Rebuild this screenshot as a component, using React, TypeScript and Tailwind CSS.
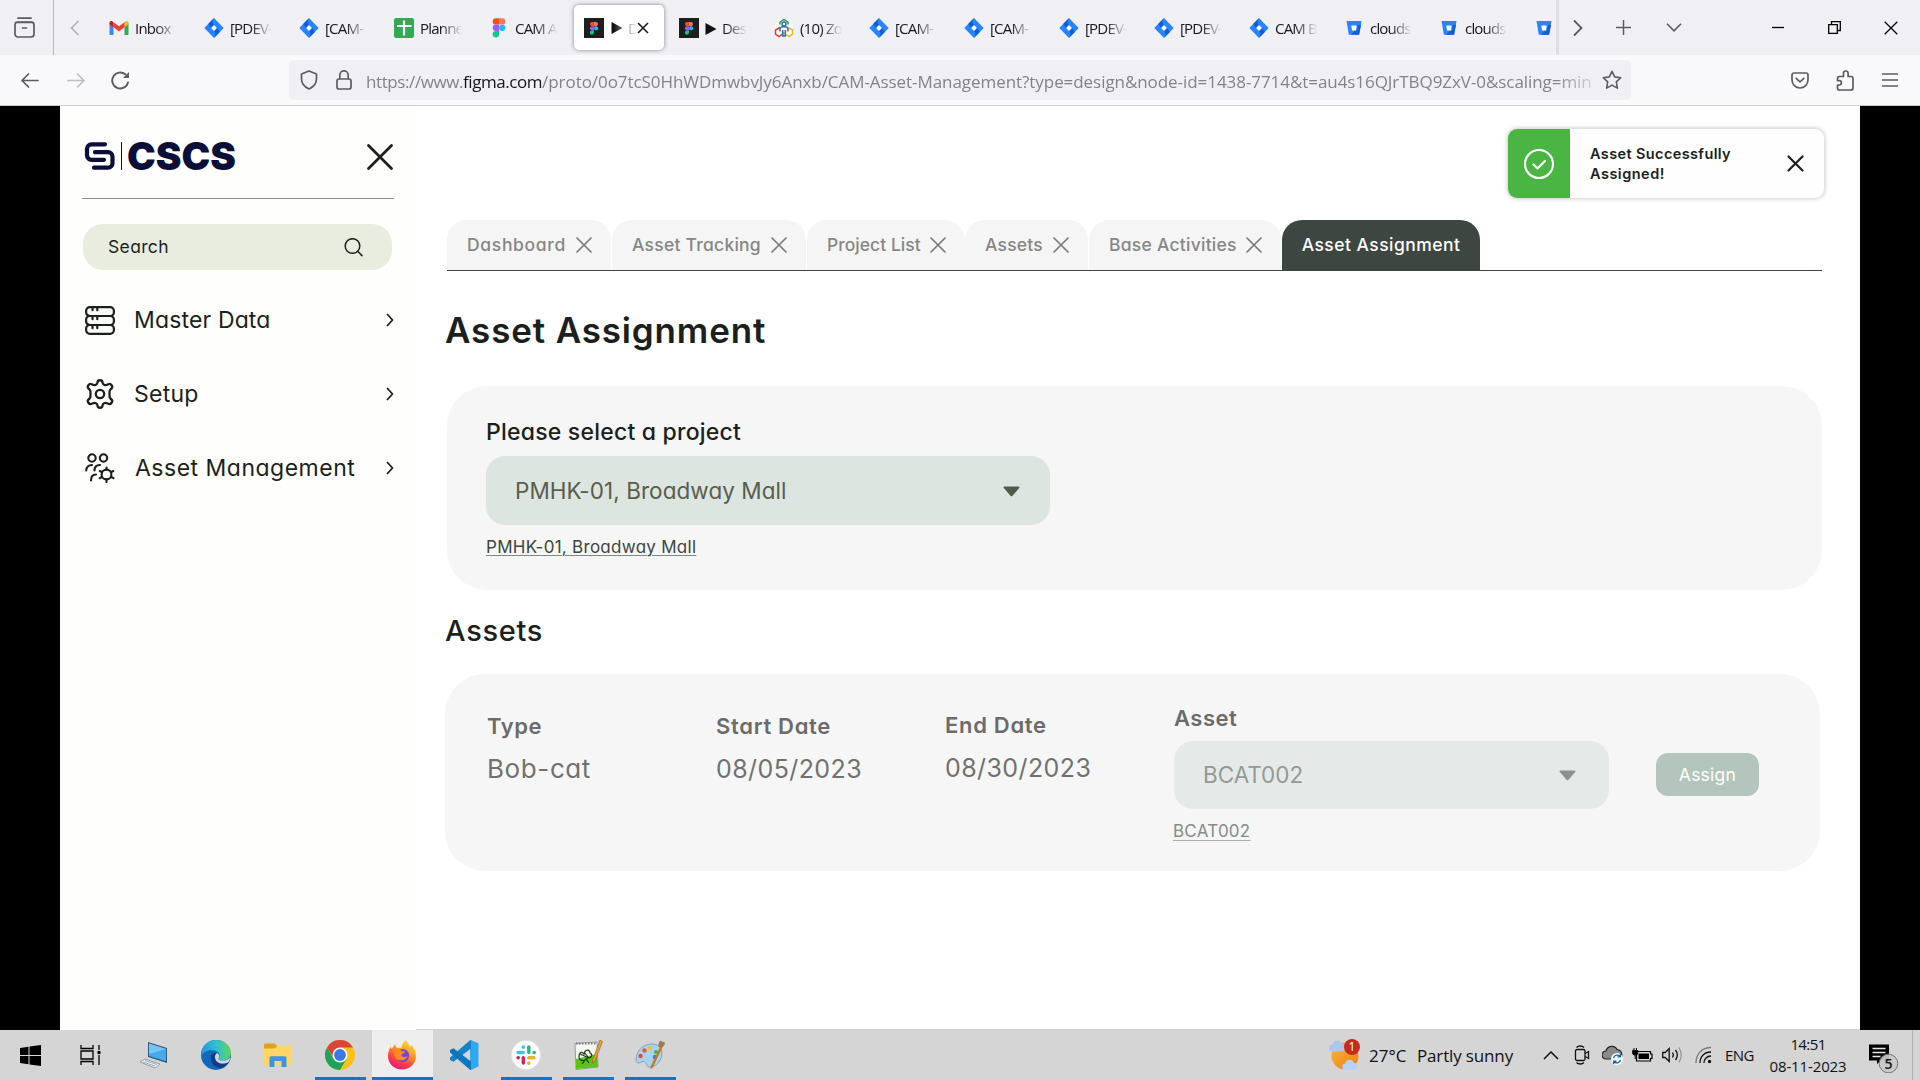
import type { ReactNode } from "react";

/* ---------- favicons ---------- */

const Gmail = () => (
  <svg width="20" height="20" viewBox="0 0 20 20">
    <path d="M0.5 5v11c0 .6.4 1 1 1h3V8z" fill="#4285F4" />
    <path d="M19.500 5v11c0 .6-.4 1-1 1h-3V8z" fill="#34A853" />
    <path d="M15.500 4.200v5l4-3V4.800c0-1.700-1.800-2.300-3-1.400z" fill="#FBBC04" />
    <path d="M4.500 9.200v-5l5.500 4.100 5.500-4.100v5L10 13.400z" fill="#EA4335" />
    <path d="M.5 4.800v1.400l4 3v-5l-1-.8c-1.200-.9-3-.3-3 1.400z" fill="#C5221F" />
  </svg>
);

const Jira = () => (
  <svg width="20" height="20" viewBox="0 0 20 20">
    <path d="M10 0l9.700 10L10 20 .3 10z" fill="#2684FF" />
    <path d="M10 0c-2 2-2 5 0 7L7 10 4.200 6z" fill="#0F5FD6" />
    <path d="M10 20c2-2 2-5 0-7l3-3 2.800 4z" fill="#0F5FD6" />
    <path d="M10 7l2.900 3-2.900 3-2.900-3z" fill="#fff" />
  </svg>
);

const Sheet = () => (
  <svg width="20" height="20" viewBox="0 0 20 20">
    <rect width="20" height="20" rx="2" fill="#34A853" />
    <path d="M10 2.500v15M3 8h14.500" stroke="#fff" strokeWidth="2.200" />
  </svg>
);

const FigmaShapes = () => (
  <>
    <path d="M3.500 0H6.500V6.600H3.500A3.300 3.300 0 0 1 3.500 0z" fill="#F24E1E" />
    <path d="M6.500 0h3a3.300 3.300 0 0 1 0 6.600h-3z" fill="#FF7262" />
    <path d="M3.500 6.600h3v6.600h-3a3.300 3.300 0 0 1 0-6.600z" fill="#A259FF" />
    <circle cx="9.800" cy="9.900" r="3.200" fill="#1ABCFE" />
    <path d="M3.500 13.200h3v3.300a3.200 3.300 0 1 1-3-3.300z" fill="#0ACF83" />
  </>
);

const Figma = () => (
  <svg width="20" height="20" viewBox="-3.500 -.2 20 20">
    <g transform="scale(1 .97)"><FigmaShapes /></g>
  </svg>
);

const FigmaDark = () => (
  <svg width="20" height="20" viewBox="0 0 20 20">
    <rect width="20" height="20" fill="#1E1E1E" />
    <g transform="translate(5.800 4) scale(.64)"><FigmaShapes /></g>
  </svg>
);

const Zoho = () => (
  <svg width="20" height="20" viewBox="0 0 20 20" fill="none" strokeWidth="1.500">
    <rect x="1" y="1" width="18" height="18" rx="7" fill="#fff" />
    <path d="M6 6.500V4.200L10 1.400l4 2.800v2.300" stroke="#22A05B" />
    <path d="M6 9.500L1.500 12v4l3.500 2.600L8.700 16v-2" stroke="#E5343D" />
    <path d="M14 9.500l4.500 2.500v4L15 18.600 11.300 16v-2" stroke="#F2B51D" />
    <circle cx="10" cy="6" r="2" stroke="#2B6CB0" />
    <path d="M6 13.500V11c0-1.400 1.600-2.200 4-2.200s4 .8 4 2.200v2.500M8.700 12v6h2.600v-6" stroke="#2B6CB0" />
  </svg>
);

const Bitbucket = () => (
  <svg width="20" height="20" viewBox="0 0 20 20">
    <path d="M2.500 3h15l-2.300 13.800H4.800z" fill="#2684FF" />
    <path d="M17 7l-2 9.800H7l4-4h2l.8-5.800z" fill="#0F5FD6" />
    <path d="M7.300 7.500h5.400l-.7 5H8z" fill="#fff" />
  </svg>
);

type Tab = { icon: ReactNode; label: string; active?: boolean; play?: boolean };

const browserTabs: Tab[] = [
  { icon: <Gmail />, label: "Inbox" },
  { icon: <Jira />, label: "[PDEV-" },
  { icon: <Jira />, label: "[CAM-" },
  { icon: <Sheet />, label: "Planne" },
  { icon: <Figma />, label: "CAM A" },
  { icon: <FigmaDark />, label: "D", active: true, play: true },
  { icon: <FigmaDark />, label: "Des", play: true },
  { icon: <Zoho />, label: "(10) Zo" },
  { icon: <Jira />, label: "[CAM-" },
  { icon: <Jira />, label: "[CAM-" },
  { icon: <Jira />, label: "[PDEV-" },
  { icon: <Jira />, label: "[PDEV-" },
  { icon: <Jira />, label: "CAM B" },
  { icon: <Bitbucket />, label: "clouds" },
  { icon: <Bitbucket />, label: "clouds" },
];

function PlayMark() {
  return (
    <svg width="12" height="14" viewBox="0 0 12 14" className="mr-[5px] shrink-0">
      <path d="M.5 1l11 6-11 6z" fill="#111" />
    </svg>
  );
}

function BrowserTab({ tab }: { tab: Tab }) {
  if (tab.active) {
    return (
      <div className="mx-[2.500px] flex h-[45px] w-[90px] shrink-0 items-center rounded-[5px] bg-white pl-[10px] shadow-[0_0_4px_rgba(0,0,0,0.45)]">
        {tab.icon}
        <div className="ml-[7px] flex w-[25px] items-center overflow-hidden pt-px [mask-image:linear-gradient(to_right,black_10%,transparent_110%)]">
          <PlayMark />
          <span>{tab.label}</span>
        </div>
        <svg width="12" height="12" viewBox="0 0 12 12" className="ml-[1px]">
          <path d="M1 1l10 10M11 1L1 11" stroke="#15141a" strokeWidth="1.500" />
        </svg>
      </div>
    );
  }
  return (
    <div className="flex h-[45px] w-[95px] shrink-0 items-center pl-[12.500px]">
      {tab.icon}
      <div className="ml-[6px] flex w-[46px] items-center whitespace-nowrap pt-[2px] tracking-[-0.8px] [mask-image:linear-gradient(to_right,black_45%,transparent_92%)]">
        {tab.play && <PlayMark />}
        <span>{tab.label}</span>
      </div>
    </div>
  );
}

function TabStrip() {
  return (
    <div className="flex h-[55px] items-center bg-[#f0f0f4] text-[15px] text-[#15141a]">
      <div className="flex h-full w-[54px] shrink-0 items-center border-r border-[#b4b4ba] pl-[14px]">
        <svg width="21" height="21" viewBox="0 0 21 21" fill="none" stroke="#5b5b66" strokeWidth="1.700" strokeLinecap="round">
          <path d="M4 1.200h13" />
          <rect x="1" y="5" width="19" height="15" rx="3" />
          <path d="M1.500 5.500h18M8.500 11h4" />
        </svg>
      </div>
      <div className="flex w-[42.500px] shrink-0 justify-center">
        <svg width="10" height="16" viewBox="0 0 10 16" fill="none" stroke="#b0b0b6" strokeWidth="1.600">
          <path d="M8.500 1L1.500 8l7 7" />
        </svg>
      </div>
      <div className="flex h-full w-[1462.500px] shrink-0 items-center overflow-hidden border-r-[3px] border-[#dedee3]">
        {browserTabs.map((t, i) => (
          <BrowserTab key={i} tab={t} />
        ))}
        <div className="shrink-0 pl-[12px]"><Bitbucket /></div>
      </div>
      <div className="flex flex-1 items-center">
        <svg width="10" height="18" viewBox="0 0 10 18" fill="none" stroke="#5b5b66" strokeWidth="1.800" className="ml-[14px]">
          <path d="M1 1.500L8.500 9 1 16.500" />
        </svg>
        <svg width="15" height="15" viewBox="0 0 15 15" stroke="#5b5b66" strokeWidth="1.500" className="ml-[33px]">
          <path d="M7.500 0v15M0 7.500h15" />
        </svg>
        <svg width="16" height="9" viewBox="0 0 16 9" fill="none" stroke="#5b5b66" strokeWidth="1.600" className="ml-[35px]">
          <path d="M1 .8l7 7 7-7" />
        </svg>
        <svg width="12" height="12" viewBox="0 0 12 12" stroke="#000" strokeWidth="1.300" className="ml-[90px]">
          <path d="M0 5.500h12" />
        </svg>
        <svg width="13" height="13" viewBox="0 0 13 13" fill="none" stroke="#000" strokeWidth="1.300" className="ml-[44px]">
          <path d="M.7 3.700h8.600v8.600H.7zM3.500 3.700V.7h8.800v8.800H9.300" />
        </svg>
        <svg width="14" height="14" viewBox="0 0 14 14" stroke="#000" strokeWidth="1.300" className="ml-[43px]">
          <path d="M.7.7l12.600 12.600M13.300.7L.7 13.300" />
        </svg>
      </div>
    </div>
  );
}

function AddressBar() {
  return (
    <div className="flex h-[51px] items-center border-b border-[#c9c9ce] bg-[#f9f9fb]">
      <svg width="18" height="15" viewBox="0 0 18 15" fill="none" stroke="#5b5b66" strokeWidth="1.700" strokeLinecap="round" strokeLinejoin="round" className="ml-[21px]">
        <path d="M17 7.500H1M7.500 1L1 7.500 7.500 14" />
      </svg>
      <svg width="18" height="15" viewBox="0 0 18 15" fill="none" stroke="#bdbdc3" strokeWidth="1.700" strokeLinecap="round" strokeLinejoin="round" className="ml-[28px]">
        <path d="M1 7.500h16M10.500 1L17 7.500 10.500 14" />
      </svg>
      <svg width="19" height="19" viewBox="0 0 19 19" fill="none" stroke="#5b5b66" strokeWidth="1.900" strokeLinecap="round" className="ml-[26px]">
        <path d="M17 11.500A8 8 0 1 1 14.500 3.500" />
        <path d="M18 1v6h-6z" fill="#5b5b66" stroke="none" />
      </svg>
      <div className="ml-[159px] flex h-[40px] w-[1342px] items-center rounded-[5px] bg-[#f0f0f4]">
        <svg width="18" height="20" viewBox="0 0 18 20" fill="none" stroke="#5b5b66" strokeWidth="1.700" strokeLinejoin="round" className="ml-[11px]">
          <path d="M9 1l7.500 3v4.500c0 5-3 8.500-7.500 10.500C4.500 17 1.500 13.500 1.500 8.500V4z" />
        </svg>
        <svg width="16" height="20" viewBox="0 0 16 20" fill="none" stroke="#5b5b66" strokeWidth="1.700" className="ml-[18px]">
          <rect x="1" y="9" width="14" height="10" rx="2" />
          <path d="M3.800 9V5a4.200 4.200 0 0 1 8.400 0v4" />
        </svg>
        <div className="ml-[14px] flex w-[1226px] overflow-hidden whitespace-nowrap pt-[4px] text-[17px] leading-6 text-[#82828a] [mask-image:linear-gradient(to_right,black_97%,transparent_101%)]">
          <span className="tracking-[-0.41px]">https://www.</span>
          <span className="tracking-[-0.44px] text-[#15141a]">figma.com</span>
          <span className="tracking-[-0.06px]">/proto/0o7tcS0HhWDmwbvJy6Anxb/CAM-Asset-Management?type=design&amp;node-id=1438-7714&amp;t=au4s16QJrTBQ9ZxV-0&amp;scaling=min</span>
        </div>
        <svg width="20" height="20" viewBox="0 0 20 20" fill="none" stroke="#5b5b66" strokeWidth="1.600" strokeLinejoin="round" className="ml-[10px]">
          <path d="M10 1.300l2.700 5.600 6.100.8-4.500 4.200 1.100 6.200L10 15.100l-5.400 3 1.100-6.200L1.200 7.700l6.100-.8z" />
        </svg>
      </div>
      <svg width="18" height="17" viewBox="0 0 18 17" fill="none" stroke="#5b5b66" strokeWidth="1.700" strokeLinecap="round" strokeLinejoin="round" className="ml-[160px]">
        <path d="M3 1h12a2 2 0 0 1 2 2v5a8 8 0 0 1-16 0V3a2 2 0 0 1 2-2z" />
        <path d="M5.200 6.300L9 10l3.800-3.700" />
      </svg>
      <svg width="18" height="21" viewBox="0 0 18 21" fill="none" stroke="#5b5b66" strokeWidth="1.700" strokeLinejoin="round" className="ml-[27px]">
        <path d="M3.500 6.500h4V3.300a2.300 2.300 0 0 1 4.600 0v3.200H15a2 2 0 0 1 2 2V18a2 2 0 0 1-2 2H3.500a2 2 0 0 1-2-2v-3h1.700a2.200 2.200 0 0 0 0-4.400H1.500V8.500a2 2 0 0 1 2-2z" />
      </svg>
      <svg width="16" height="14" viewBox="0 0 16 14" stroke="#5b5b66" strokeWidth="1.500" className="ml-[28px]">
        <path d="M0 1h16M0 7h16M0 13h16" />
      </svg>
    </div>
  );
}

/* ---------- sidebar ---------- */

const ServerIcon = () => (
  <svg width="30" height="29" viewBox="0 0 30 29" fill="none" stroke="#1b1f1d" strokeWidth="2.200" strokeLinecap="round">
    <rect x="1.100" y="1.100" width="27.800" height="8.900" rx="3.800" />
    <rect x="1.100" y="10" width="27.800" height="9" rx="3.800" />
    <rect x="1.100" y="19" width="27.800" height="8.900" rx="3.800" />
    <path d="M7.500 2v2.200M12.300 2v2.200M7.500 11v2.200M12.300 11v2.200M7.500 20v2.200M12.300 20v2.200" />
  </svg>
);

const GearIcon = () => (
  <svg width="30" height="30" viewBox="0 0 30 30" fill="none" stroke="#1b1f1d" strokeWidth="2.300" strokeLinejoin="round">
    <path d="M12.500 3.500c0-3 5-3 5 0 .2 2 2.600 3.300 4.600 2.300l1.200-.6c2.600-1.200 5.200 2.600 3.100 4.400l-.9.800c-1.300 1.100-1 2.800-1 4.600s-.3 3.500 1 4.600l.9.800c2.100 1.800-.5 5.600-3.100 4.400l-1.200-.6c-2-1-4.400.3-4.600 2.300 0 3-5 3-5 0-.2-2-2.600-3.300-4.600-2.300l-1.200.6c-2.600 1.200-5.200-2.600-3.100-4.400l.9-.8c1.300-1.100 1-2.800 1-4.600s.3-3.500-1-4.600l-.9-.8C1.500 7.800 4.100 4 6.700 5.200l1.200.6c2 1 4.400-.3 4.600-2.300z" />
    <circle cx="15" cy="15" r="4.200" />
  </svg>
);

const TeamGearIcon = () => (
  <svg width="30" height="30" viewBox="0 0 30 30" fill="none" stroke="#1b1f1d" strokeWidth="2.100" strokeLinecap="round" strokeLinejoin="round">
    <circle cx="7" cy="5" r="3.700" />
    <circle cx="18.500" cy="5" r="3.700" />
    <path d="M1.200 17.500c0-3.500 2.300-5.500 5.800-5.500M9.500 17.500c0-3.600 2-5.700 5.500-5.500M6 27.500c0-3.500 1.800-6 5-6" />
    <circle cx="21.500" cy="21.500" r="4.900" />
    <path d="M21.500 14.500v2M21.500 26.500v2.500M14.800 18l2 1M26.400 24l2 1.200M28.300 18l-2 1M14.800 25.200l2-1.200" />
  </svg>
);

function NavItem({ icon, label, className }: { icon: ReactNode; label: string; className: string }) {
  return (
    <div className="flex h-[74px] items-center pl-[24px]">
      <div className="flex w-[31px] justify-center">{icon}</div>
      <span className={`ml-[19px] flex-1 text-[23px] leading-8 text-[#1b1f1d] ${className}`}>{label}</span>
      <svg width="8" height="14" viewBox="0 0 8 14" fill="none" stroke="#1b1f1d" strokeWidth="1.800" strokeLinejoin="round" className="mr-[22px]">
        <path d="M1 1l5.500 6L1 13" />
      </svg>
    </div>
  );
}

function Sidebar() {
  return (
    <aside className="flex w-[356px] shrink-0 flex-col bg-[#fefefc]">
      <div className="flex h-[92px] items-center pl-[24px] pt-[8px]">
        <svg width="32" height="28" viewBox="0 0 32 28" fill="none" stroke="#0b0e38" strokeWidth="4.200" strokeLinecap="round">
          <path d="M21 2.300H7.500A4.500 4.500 0 0 0 3 6.800v6.500a4.500 4.500 0 0 0 4.500 4.500H20" />
          <path d="M10 25.700h14a4.500 4.500 0 0 0 4.500-4.500v-6.500a4.500 4.500 0 0 0-4.500-4.500H11" />
        </svg>
        <div className="ml-[5px] h-[28px] w-px bg-[#0b0e38]" />
        <span className="ml-[5px] w-[113px] text-[38.500px] font-black leading-[44px] tracking-[0px] text-[#0b0e38]">CSCS</span>
        <svg width="26" height="26" viewBox="0 0 26 26" stroke="#1b1f1d" strokeWidth="2.700" strokeLinecap="round" className="ml-[127px] mt-[1px] shrink-0">
          <path d="M1.500 1.500l23 23M24.500 1.500l-23 23" />
        </svg>
      </div>
      <div className="ml-[22px] w-[312px] border-t border-[#8f8f8e]" />
      <div className="ml-[23px] mt-[25px] flex h-[46px] w-[309px] items-center justify-between rounded-[20px] bg-[#e9ede0] pl-[25px] pr-[29px]">
        <span className="pt-px text-[17.500px] tracking-[0.35px] text-[#1b1f1d]">Search</span>
        <svg width="19" height="19" viewBox="0 0 19 19" fill="none" stroke="#1b1f1d" strokeWidth="1.500" strokeLinecap="round">
          <circle cx="8.500" cy="8" r="7.300" />
          <path d="M13.700 13.300l4.300 4.300" />
        </svg>
      </div>
      <div className="mt-[13px] flex flex-col">
        <NavItem icon={<ServerIcon />} label="Master Data" className="tracking-[0.15px]" />
        <NavItem icon={<GearIcon />} label="Setup" className="tracking-[0.25px]" />
        <NavItem icon={<TeamGearIcon />} label="Asset Management" className="pl-px tracking-[0.5px]" />
      </div>
    </aside>
  );
}

/* ---------- main area ---------- */

function PageTab({ label, className }: { label: string; className: string }) {
  return (
    <div className={`flex h-[50px] shrink-0 items-center justify-between rounded-t-[20px] bg-[#f5f5f5] pl-[20px] pr-[19px] text-[17.500px] font-medium text-[#868686] ${className}`}>
      <span className="pt-px">{label}</span>
      <svg width="16" height="16" viewBox="0 0 16 16" stroke="#7b7b7b" strokeWidth="1.700" strokeLinecap="round">
        <path d="M1 1l14 14M15 1L1 15" />
      </svg>
    </div>
  );
}

function Caret({ className }: { className: string }) {
  return (
    <svg width="17" height="11" viewBox="0 0 17 11" className={className}>
      <path d="M1.500.5h14c1 0 1.300.9.700 1.500L9.500 9.800c-.6.7-1.400.7-2 0L.8 2C.2 1.400.5.500 1.500.500z" />
    </svg>
  );
}

function Toast() {
  return (
    <div className="mr-[36px] mt-[23px] flex h-[69px] w-[316px] items-center self-end overflow-hidden rounded-[9px] bg-[#fefefe] shadow-[0_0_4px_1px_rgba(0,0,0,0.2)]">
      <div className="flex h-full w-[62px] items-center justify-center bg-[#4ab543]">
        <svg width="32" height="32" viewBox="0 0 32 32" fill="none" stroke="#fff" strokeWidth="2.200" strokeLinecap="round" strokeLinejoin="round">
          <circle cx="16" cy="16" r="14" />
          <path d="M10.500 16.500l4 4 7.500-7.500" />
        </svg>
      </div>
      <div className="flex w-[196px] flex-col pl-[20px] text-[14.500px] font-semibold leading-5 text-[#1b1f1d]">
        <span className="tracking-[0.38px]">Asset Successfully</span>
        <span className="tracking-[0.5px]">Assigned!</span>
      </div>
      <svg width="17" height="17" viewBox="0 0 17 17" stroke="#1b1f1d" strokeWidth="2.200" strokeLinecap="round" className="ml-[21px]">
        <path d="M1.500 1.500l14 14M15.500 1.500l-14 14" />
      </svg>
    </div>
  );
}

function Field({ label, value, labelClass, valueClass, className }: { label: string; value: string; labelClass: string; valueClass: string; className: string }) {
  return (
    <div className={`flex shrink-0 flex-col ${className}`}>
      <span className={`h-[30px] text-[22px] font-semibold leading-[30px] text-[#6b6b6b] ${labelClass}`}>{label}</span>
      <span className={`mt-[11px] h-[34px] leading-[34px] text-[#717171] ${valueClass}`}>{value}</span>
    </div>
  );
}

function Main() {
  return (
    <main className="flex flex-1 flex-col border-b border-[#d0d0d0] bg-white pl-[30px]">
      <Toast />
      <div className="ml-[1px] mt-[22px] flex h-[51px] w-[1375px] border-b-[1.500px] border-[#3e4641]">
        <PageTab label="Dashboard" className="w-[164px] tracking-[0.68px]" />
        <PageTab label="Asset Tracking" className="ml-px w-[194px] tracking-[0.25px]" />
        <PageTab label="Project List" className="ml-px w-[158px] tracking-[0.03px]" />
        <PageTab label="Assets" className="w-[123px] tracking-[0.2px]" />
        <PageTab label="Base Activities" className="ml-px w-[192px] tracking-[0.25px]" />
        <div className="ml-px flex h-[50px] w-[198px] items-center justify-center rounded-t-[20px] bg-[#3e4641] pt-px text-[17.500px] font-medium tracking-[0.46px] text-white">
          Asset Assignment
        </div>
      </div>

      <h1 className="-ml-px mt-[36px] h-[46px] text-[35px] font-semibold leading-[46px] tracking-[0.85px] text-[#1b1f1d]">Asset Assignment</h1>

      <section className="ml-[1px] mt-[33px] flex h-[204px] w-[1375px] flex-col rounded-[40px] bg-[#f6f6f6] pl-[39px] pt-[30px]">
        <span className="h-[32px] text-[23px] font-medium leading-[32px] tracking-[0.22px] text-[#1b1f1d]">Please select a project</span>
        <div className="mt-[8px] flex h-[69px] w-[564px] items-center justify-between rounded-[19px] bg-[#dce5e0] pl-[29px] pr-[30px] text-[22.500px] tracking-[0.06px] text-[#5a5d4c]">
          <span className="pt-px">PMHK-01, Broadway Mall</span>
          <Caret className="mt-[2px] fill-[#555a48]" />
        </div>
        <a className="mt-[12px] h-[21px] w-fit text-[17px] leading-[21px] tracking-[0.28px] text-[#3e4641] underline decoration-[#7d8a83] decoration-1 underline-offset-[2px]">PMHK-01, Broadway Mall</a>
      </section>

      <h2 className="-ml-px mt-[21px] h-[40px] text-[29px] font-medium leading-[40px] tracking-[0.7px] text-[#1b1f1d]">Assets</h2>

      <section className="-ml-px mt-[23px] flex h-[197px] w-[1375px] items-start rounded-[40px] bg-[#f6f6f6] pl-[42px]">
        <Field label="Type" value="Bob-cat" labelClass="tracking-[0.55px]" valueClass="text-[26px] tracking-[0.6px]" className="w-[229px] pt-[37px]" />
        <Field label="Start Date" value="08/05/2023" labelClass="tracking-[0.68px]" valueClass="text-[25px] tracking-[0.41px]" className="w-[229px] pt-[37px]" />
        <Field label="End Date" value="08/30/2023" labelClass="tracking-[0.7px]" valueClass="text-[25px] tracking-[0.41px]" className="w-[229px] pt-[36px]" />
        <div className="flex w-[435px] shrink-0 flex-col pt-[29px]">
          <span className="h-[30px] text-[22px] font-semibold leading-[30px] tracking-[0.5px] text-[#6b6b6b]">Asset</span>
          <div className="mt-[8px] flex h-[68px] items-center justify-between rounded-[19px] bg-[#e5eae8] pl-[29px] pr-[33px] text-[22.500px] tracking-[0px] text-[#929a96]">
            BCAT002
            <Caret className="mt-[1px] fill-[#8b928f]" />
          </div>
          <a className="-ml-px mt-[12px] h-[21px] w-fit text-[17px] leading-[21px] tracking-[0.25px] text-[#878c89] underline decoration-[#a9afac] decoration-1 underline-offset-[3px]">BCAT002</a>
        </div>
        <button className="ml-[47px] mt-[79px] h-[43px] w-[103px] rounded-[12px] bg-[#b3c5bc] pt-px text-[17.500px] tracking-[0.25px] text-white">Assign</button>
      </section>
    </main>
  );
}

/* ---------- taskbar ---------- */

const WindowsIcon = () => (
  <svg width="21" height="21" viewBox="0 0 21 21">
    <path d="M0 3l8.500-1.200V10H0zM9.500 1.600L21 0v10H9.500zM0 11h8.500v8.200L0 18zM9.500 11H21v10L9.500 19.400z" />
  </svg>
);
const TaskViewIcon = () => (
  <svg width="21" height="20" viewBox="0 0 21 20" fill="none" stroke="#000" strokeWidth="1.300">
    <path d="M1 0v3.500h12V0M1 20v-3.500h12V20M1 6h12v8H1zM19 0v5M19 10v10" />
    <path d="M17.500 6h3v3h-3z" fill="#000" stroke="none" />
  </svg>
);
const LaptopIcon = () => (
  <svg width="29" height="28" viewBox="0 0 29 28">
    <path d="M8 1l19 6v15L8 16z" fill="#34587a" />
    <path d="M9 2.500L26 8v12.300L9 15z" fill="#45a9ee" />
    <path d="M9 2.500L26 8 9 13z" fill="#76c5f7" />
    <path d="M0 21l5-3 15 5-5 4z" fill="#eceff1" stroke="#78909c" strokeWidth=".8" />
    <path d="M3 21l12 4M5 19.500l12 4" stroke="#78909c" strokeWidth=".7" />
  </svg>
);
const EdgeIcon = () => (
  <svg width="30" height="30" viewBox="0 0 30 30">
    <defs>
      <linearGradient id="edgeTop" x1="0" y1=".5" x2="1" y2=".4">
        <stop offset="0" stopColor="#2299e0" />
        <stop offset=".55" stopColor="#2fc2cf" />
        <stop offset="1" stopColor="#66d64a" />
      </linearGradient>
    </defs>
    <circle cx="15" cy="15" r="15" fill="#1466b8" />
    <path d="M.3 13C1 5.500 7.300 0 15 0c9 0 15 6.500 15 12.500 0 5-3.700 8-8 8-3.500 0-5-1.300-4-3 1.500-2.500 0-6.500-5-7C6.500 9.800 1.500 12 .3 17z" fill="url(#edgeTop)" />
    <path d="M10 16c-1 6 3.500 12.500 10 12 3-.5 6-3 7.500-6-6 3.500-13.500 1-13.500-5 0-2 1.200-3.400 2-4-3-.5-5.500.8-6 3z" fill="#0c3f83" />
    <path d="M14 17c0-2 1.200-3.400 2-4 2 .8 2.700 3 1.800 4.700-1 1.800.7 2.900 4.200 2.900 2.500 0 5-1 7.200-3.200-.2 1.700-.8 3.300-1.700 4.600-6 3.500-13.500 1-13.500-5z" fill="#d4d4d4" />
  </svg>
);
const FolderIcon = () => (
  <svg width="28" height="25" viewBox="0 0 28 25">
    <path d="M0 2c0-1 .5-1.500 1.500-1.500h9L13 3v4H0z" fill="#E0A21A" />
    <path d="M0 5.500h11l3-3h13.500V22H0z" fill="#FFD566" />
    <path d="M5.500 24v-9c0-1 .6-1.800 1.800-1.800h13.400c1.200 0 1.800.8 1.800 1.800v9h-5v-6h-7v6z" fill="#3A96DD" />
  </svg>
);
const ChromeIcon = () => (
  <svg width="30" height="30" viewBox="0 0 30 30">
    <circle cx="15" cy="15" r="15" fill="#FBC116" />
    <path d="M2 7.500A15 15 0 0 1 28 7.500H15L9 18.500z" fill="#DB4437" />
    <path d="M2 7.500A15 15 0 0 0 15 30l6.500-11.200L8.500 18.800z" fill="#1DA35B" />
    <circle cx="15" cy="15" r="7.500" fill="#fff" />
    <circle cx="15" cy="15" r="5.900" fill="#3B78E7" />
  </svg>
);
const FirefoxIcon = () => (
  <svg width="30" height="30" viewBox="0 0 30 30">
    <defs>
      <linearGradient id="fox" x1=".8" y1="0" x2=".3" y2="1">
        <stop offset="0" stopColor="#FFE83B" />
        <stop offset=".4" stopColor="#FF9A1F" />
        <stop offset=".75" stopColor="#FF3B47" />
        <stop offset="1" stopColor="#E31587" />
      </linearGradient>
    </defs>
    <path d="M18.500 0c3 3 4 5 4.500 7 1-.8 1-1.800 1-2.500 3 3 5 7 5 11.500C29 24 22.800 29.500 15 29.500S1 24 1 16c0-4 1-7 3-9.500 0 1.300.2 2 .7 2.700C5.800 7 7 5.500 8.500 4.300c0 1.500.5 3 2 3.700 1.500-.5 3-.3 4 0 .3-3 1.500-6 4-8z" fill="url(#fox)" />
    <circle cx="15.500" cy="15.500" r="6.600" fill="#7542E5" />
    <path d="M7 12c2-3 6-2.500 8-1 1.800 0 3 .6 3 1.300-.5 1.200-3 1-3.500 2.500 0 2 3.500 3.500 6 1-1 5-9 6.500-12 2C7.500 16.500 7 14.500 7 12z" fill="#FF8A1E" />
  </svg>
);
const VsCodeIcon = () => (
  <svg width="30" height="30" viewBox="0 0 30 30">
    <path d="M22 0l7.500 3.500v23L22 30l-1-8V8z" fill="#2FA8EE" />
    <path d="M22 0v8.500L4.500 21.700 1 20v-2.500L21 .3z" fill="#1583CC" />
    <path d="M22 30v-8.500L4.500 8.300 1 10v2.500L21 29.700z" fill="#0F75BD" />
  </svg>
);
const SlackIcon = () => (
  <svg width="30" height="30" viewBox="0 0 30 30" strokeWidth="3.400" strokeLinecap="round">
    <circle cx="15" cy="15" r="14.500" fill="#fff" stroke="#e3e3e3" strokeWidth=".6" />
    <path d="M7 12.500h5.300M12.300 7v.3" stroke="#36C5F0" />
    <path d="M17.800 7v5.500M23 12.500h.3" stroke="#2EB67D" />
    <path d="M12.300 17.800V23M7 17.800h.3" stroke="#E01E5A" />
    <path d="M17.800 17.800H23M17.800 23v.3" stroke="#ECB22E" />
  </svg>
);
const NotepadIcon = () => (
  <svg width="30" height="30" viewBox="0 0 30 30">
    <path d="M2 3.500L24 2l1 25-22 2.500z" fill="#f4f6f2" stroke="#888" strokeWidth=".8" />
    <path d="M3 19l21-5 1 13-22 2z" fill="#5fc01a" />
    <path d="M3 3.500h21" stroke="#777" strokeWidth="2" strokeDasharray="1.500 1.500" />
    <path d="M6 17c0-5 3-6 5-3 1-5 6-5 6-1 3 1 2 5-2 5-3 4-9 3-9-1zM9 24l4-5 3 4M7 14l9 4M11 12l4 5" fill="none" stroke="#1f3b12" strokeWidth="1.200" />
    <path d="M27 0l2.500 1.500L22 21l-2.500 2 .3-3.500z" fill="#E8A33D" stroke="#8b5a1c" strokeWidth=".6" />
  </svg>
);
const PaintIcon = () => (
  <svg width="31" height="30" viewBox="0 0 31 30">
    <path d="M1 20C1 11 8 4 17 4c6 0 10 3.500 10 9 0 8-6 14-12 14-4 0-3-3.500-5-5s-4 .5-6 1c-2 .4-3-1-3-3z" fill="#a9d3ea" stroke="#6d9cb8" strokeWidth=".8" />
    <circle cx="5.500" cy="16" r="2.200" fill="#E14B3B" />
    <circle cx="9.500" cy="10.500" r="2.200" fill="#E8573F" />
    <circle cx="15" cy="8" r="2.200" fill="#F3C13A" />
    <circle cx="20" cy="17" r="2.200" fill="#3B7DD8" />
    <circle cx="21" cy="12" r="2" fill="#4CB04A" />
    <path d="M25 7l2 1.500L17.500 28l-2 1 .2-2.500z" fill="#C9762B" />
    <path d="M24 7c-1.500-3 0-5 1.500-6.500 1 1.500 3 1 4.500 2 0 3-2.500 4.500-3.500 6z" fill="#A07B52" />
  </svg>
);

function TaskCell({ icon, open, active }: { icon: ReactNode; open?: boolean; active?: boolean }) {
  return (
    <div className="flex h-[50px] w-[62px] shrink-0 flex-col items-center">
      <div className={`flex h-[47px] w-[61px] items-center justify-center pt-[3px] ${active ? "bg-[#eeeeee]" : ""}`}>{icon}</div>
      <div className={`h-[3px] ${active ? "w-[61px] bg-[#0078d7]" : open ? "w-[51px] bg-[#0078d7]" : "w-0"}`} />
    </div>
  );
}

function WeatherIcon() {
  return (
    <svg width="31" height="34" viewBox="0 0 31 34">
      <defs>
        <linearGradient id="sun" x1="0" y1="0" x2="1" y2="1">
          <stop offset="0" stopColor="#FBB53C" />
          <stop offset="1" stopColor="#EF7D15" />
        </linearGradient>
      </defs>
      <circle cx="16" cy="18" r="13.500" fill="url(#sun)" />
      <path d="M3.500 13.500a3.500 3.500 0 0 1 0-7C5 1.500 11 1 13 6c4-.5 5 7 0 7.500z" fill="#A9C7F5" />
      <path d="M16 32a3.300 3.300 0 0 1 0-6.500c1.500-5 7.500-5 9-.5 5 0 5 7 0 7z" fill="#B9D1F8" />
      <circle cx="23" cy="9" r="8" fill="#C42B1C" />
    </svg>
  );
}

function Taskbar() {
  return (
    <footer className="flex h-[50px] items-center bg-[#d5d5d5] text-[#111]">
      <div className="flex w-[60px] justify-center"><WindowsIcon /></div>
      <div className="flex w-[63px] justify-center pr-[2px]"><TaskViewIcon /></div>
      <TaskCell icon={<LaptopIcon />} />
      <TaskCell icon={<EdgeIcon />} />
      <TaskCell icon={<FolderIcon />} />
      <TaskCell icon={<ChromeIcon />} open />
      <TaskCell icon={<FirefoxIcon />} open active />
      <TaskCell icon={<VsCodeIcon />} />
      <TaskCell icon={<SlackIcon />} open />
      <TaskCell icon={<NotepadIcon />} open />
      <TaskCell icon={<PaintIcon />} open />

      <div className="relative ml-[648px] shrink-0">
        <WeatherIcon />
        <span className="absolute left-[15px] top-[1px] w-[16px] text-center text-[12px] leading-4 text-white">1</span>
      </div>
      <span className="ml-[9px] w-[48px] shrink-0 pt-[2px] text-[17px]">27°C</span>
      <span className="w-[126px] shrink-0 pt-[2px] text-[17px] tracking-[-0.15px]">Partly sunny</span>
      <svg width="16" height="9" viewBox="0 0 16 9" fill="none" stroke="#111" strokeWidth="1.500" className="shrink-0">
        <path d="M1 8l7-7 7 7" />
      </svg>
      <svg width="16" height="20" viewBox="0 0 16 20" fill="none" stroke="#111" strokeWidth="1.300" className="ml-[15px] shrink-0">
        <rect x="1.500" y="4.500" width="9.500" height="11" rx="1.500" />
        <path d="M11 8.500l3.500-2v7l-3.500-2M2.500 2.500c2-2 5.500-2 7.500 0M2.500 17.500c2 2 5.500 2 7.500 0" />
      </svg>
      <svg width="21" height="20" viewBox="0 0 21 20" className="ml-[12px] shrink-0">
        <path d="M4 14a4 4 0 0 1 0-8c1.500-6 9-6 11-1.500 6 .5 6.500 9 1 9.500z" fill="#8a8a8a" stroke="#222" strokeWidth="1.200" />
        <circle cx="15" cy="14" r="6" fill="#fff" />
        <path d="M11.500 13a3.700 3.700 0 0 1 6.500-1.500M18.500 15a3.700 3.700 0 0 1-6.500 1.500M18.300 9v2.800h-2.800M11.700 19v-2.800h2.800" fill="none" stroke="#0067c0" strokeWidth="1.300" />
      </svg>
      <svg width="21" height="16" viewBox="0 0 21 16" className="ml-[9px] shrink-0">
        <path d="M4.500 4.500h14V7h1.500v4.500h-1.500V14h-14z" fill="none" stroke="#000" strokeWidth="1.200" />
        <path d="M6.500 6.500H17V12H6.500z" />
        <path d="M.7 3.500h5v3c0 2-5 2-5 0zM2 1v3M4.500 1v3M3.200 7v5" fill="#000" stroke="#000" strokeWidth="1" />
      </svg>
      <svg width="21" height="18" viewBox="0 0 21 18" fill="none" stroke="#111" strokeWidth="1.300" className="ml-[9px] shrink-0">
        <path d="M.7 6.500h2.500l4-4v13l-4-4H.7z" />
        <path d="M10.500 6.500c1 1.500 1 3.500 0 5M13.500 4c2.200 3 2.200 7 0 10" />
        <path d="M16.800 1.500c3.200 4.500 3.200 10.500 0 15" stroke="#999" />
      </svg>
      <svg width="17" height="18" viewBox="0 0 17 18" fill="none" stroke="#111" strokeWidth="1.300" className="ml-[12px] shrink-0">
        <path d="M1 17C1 8 7 1.500 16 1.500" stroke="#777" />
        <path d="M5 17c0-6.500 4.500-11 11-11M9 17c0-4.200 3-7 7-7" />
        <circle cx="14.500" cy="15.500" r="1.700" fill="#111" stroke="none" />
      </svg>
      <span className="ml-[13px] w-[37px] shrink-0 pt-px text-[15px] tracking-[-0.52px]">ENG</span>
      <div className="flex w-[92px] shrink-0 flex-col items-center text-[15px] leading-[22px]">
        <span className="tracking-[-0.6px]">14:51</span>
        <span className="tracking-[-0.13px]">08-11-2023</span>
      </div>
      <div className="relative ml-[14px] h-[36px] w-[32px] shrink-0">
        <svg width="32" height="36" viewBox="0 0 32 36">
          <path d="M1 7.500h20v16h-8l-4 3.500v-3.500H1z" fill="#000" />
          <path d="M4.500 11.500h13M4.500 15.500h13M4.500 19.500h8" stroke="#e5e5e5" strokeWidth="1.300" />
          <circle cx="20.500" cy="26.500" r="9.300" fill="#c9c9c9" fillOpacity=".93" stroke="#777" strokeWidth="1" />
        </svg>
        <span className="absolute left-[11px] top-[17px] w-[19px] text-center text-[14px] font-semibold leading-[19px]">5</span>
      </div>
      <div className="ml-[12px] h-full w-px shrink-0 bg-[#b0b0b0]" />
    </footer>
  );
}

export default function App() {
  return (
    <div className="flex h-[1080px] w-[1920px] flex-col overflow-hidden font-['Open_Sans','Noto_Sans',sans-serif]">
      <TabStrip />
      <AddressBar />
      <div className="flex h-[924px] bg-black px-[60px] font-['Inter',sans-serif] [font-feature-settings:'cv11']">
        <Sidebar />
        <Main />
      </div>
      <Taskbar />
    </div>
  );
}
